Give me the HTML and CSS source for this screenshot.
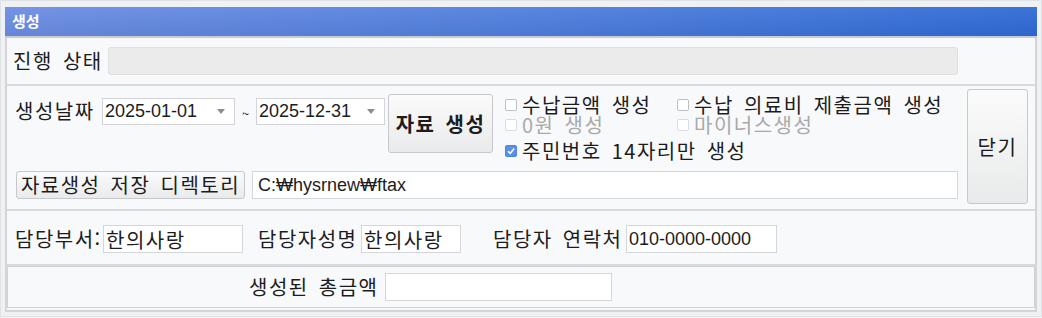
FILE: index.html
```html
<!DOCTYPE html>
<html lang="ko">
<head>
    <meta charset="UTF-8">
    <meta name="viewport" content="width=device-width, initial-scale=1.0">
    <title>생성</title>
    <link rel="stylesheet" href="styles.css">
</head>
<body>
    <div class="window">
        <div class="panel">
            <div class="titlebar">생성</div>
            <div class="panel-body">
                <!-- 진행 상태 -->
                <div class="sec sec-progress">
                    <span class="lbl">진행 상태</span>
                    <div class="progress"></div>
                </div>

                <!-- 자료 생성 -->
                <div class="sec sec-make">
                    <div class="make-main">
                        <div class="make-top">
                            <div class="date-row">
                                <span class="lbl lbl-date">생성날짜</span>
                                <div class="combo combo-from"><span>2025-01-01</span><i class="arrow"></i></div>
                                <span class="tilde">~</span>
                                <div class="combo combo-to"><span>2025-12-31</span><i class="arrow"></i></div>
                            </div>
                            <button class="btn btn-make">자료 생성</button>
                            <div class="opts">
                                <label class="opt"><span class="chk"></span>수납금액 생성</label>
                                <label class="opt"><span class="chk"></span>수납 의료비 제출금액 생성</label>
                                <label class="opt disabled"><span class="chk"></span>0원 생성</label>
                                <label class="opt disabled"><span class="chk"></span>마이너스생성</label>
                                <label class="opt opt-last"><span class="chk checked"><svg width="10" height="10" viewBox="0 0 10 10"><polyline points="2,5.2 4.2,7.4 8.2,2.6" fill="none" stroke="#fff" stroke-width="1.6"/></svg></span>주민번호 14자리만 생성</label>
                            </div>
                        </div>
                        <div class="make-dir">
                            <button class="btn btn-dir">자료생성 저장 디렉토리</button>
                            <input class="field field-dir" type="text" value="C:₩hysrnew₩ftax" readonly>
                        </div>
                    </div>
                    <button class="btn btn-close">닫기</button>
                </div>

                <!-- 담당자 정보 -->
                <div class="sec sec-staff">
                    <span class="lbl lbl-dept">담당부서:</span>
                    <input class="field field-dept" type="text" value="한의사랑" readonly>
                    <span class="lbl lbl-name">담당자성명</span>
                    <input class="field field-name" type="text" value="한의사랑" readonly>
                    <span class="lbl lbl-tel">담당자 연락처</span>
                    <input class="field field-tel num" type="text" value="010-0000-0000" readonly>
                </div>

                <!-- 총금액 -->
                <div class="sec-total">
                    <span class="lbl lbl-total">생성된 총금액</span>
                    <input class="field field-total" type="text" value="" readonly>
                </div>
            </div>
        </div>
    </div>
</body>
</html>
```

FILE: styles.css
```css
* {
    box-sizing: border-box;
}
body {
    margin: 0;
    background-color: #f3f4f6;
    font-family: "Noto Sans CJK KR", sans-serif;
    font-size: 20px;
    letter-spacing: 1.5px;
    word-spacing: 3px;
    color: #1c1c1c;
}
.window {
    width: 1042px;
    height: 317px;
    border: 1px solid #dfe2e6;
    background-color: #f0f1f3;
    padding: 6px 0 0 4px;
}
.panel {
    width: 1032px;
}
.titlebar {
    height: 31px;
    padding-left: 7px;
    line-height: 27px;
    font-size: 15px;
    font-weight: bold;
    letter-spacing: 0;
    color: #fff;
    border-bottom: 2px solid #c9cbcf;
    background: linear-gradient(to bottom, rgba(255,255,255,0.06), rgba(0,0,0,0.05)),
                linear-gradient(to right, #6c8de3 0%, #4f7fde 50%, #2f6ad6 100%);
}
.panel-body {
    background-color: #f8f9fb;
    border-left: 2px solid #d3d5d8;
    border-right: 2px solid #d3d5d8;
    border-bottom: 2px solid #d3d5d8;
    padding-bottom: 2px;
}
.sec {
    border-bottom: 2px solid #d8dadd;
}
.lbl {
    flex: none;
    line-height: 28px;
    white-space: nowrap;
}

/* 진행 상태 */
.sec-progress {
    display: flex;
    align-items: center;
    height: 48px;
    padding: 0 77px 0 6px;
    gap: 5px;
}
.progress {
    flex: 1;
    height: 28px;
    background-color: #ebebeb;
    border: 1px solid #dfdfdf;
    border-radius: 3px;
}

/* 자료 생성 */
.sec-make {
    display: flex;
    height: 125px;
    padding: 3px 7px 0 7px;
    gap: 9px;
}
.make-main {
    flex: 1;
    padding-top: 5px;
}
.make-top {
    display: flex;
    align-items: flex-start;
    height: 67px;
}
.date-row {
    display: flex;
    align-items: center;
    margin-top: 3px;
}
.lbl-date {
    width: 88px;
    padding-left: 1px;
}
.combo {
    display: flex;
    align-items: center;
    height: 27px;
    padding: 0 9px 0 2px;
    background-color: #fff;
    border: 1px solid #d2d4d7;
    font-family: "Liberation Sans", sans-serif;
    font-size: 18px;
    letter-spacing: 0;
    word-spacing: 0;
}
.combo-from {
    width: 133px;
}
.combo-to {
    width: 129px;
}
.arrow {
    margin-left: auto;
    width: 0;
    height: 0;
    border-top: 5px solid #8c8c8c;
    border-left: 4px solid transparent;
    border-right: 4px solid transparent;
}
.tilde {
    width: 21px;
    text-align: center;
    font-size: 13px;
    letter-spacing: 0;
    padding-top: 4px;
}
.btn {
    font-family: "Noto Sans CJK KR", sans-serif;
    font-size: 20px;
    letter-spacing: 1.5px;
    word-spacing: 3px;
    color: #1c1c1c;
    background: linear-gradient(to bottom, #fbfbfb, #e9eaeb);
    border: 1px solid #c6c8cb;
    border-radius: 3px;
    padding: 0;
    cursor: pointer;
}
.btn-make {
    width: 105px;
    height: 59px;
    margin-left: 3px;
    font-weight: bold;
}
.opts {
    display: grid;
    grid-template-columns: 172px auto;
    margin: 1px 0 0 12px;
}
.opt {
    display: flex;
    align-items: center;
    gap: 5px;
    height: 20px;
    line-height: 20px;
    white-space: nowrap;
}
.opt.disabled {
    color: #a9a9a9;
}
.opt-last {
    margin-top: 6px;
    grid-column: 1 / 3;
}
.chk {
    display: flex;
    align-items: center;
    justify-content: center;
    width: 12px;
    height: 12px;
    background-color: #fff;
    border: 1px solid #bcbec1;
    border-radius: 2px;
}
.opt.disabled .chk {
    border-color: #dadcdf;
}
.chk.checked {
    background-color: #5c8fe8;
    border-color: #4f83e0;
}
.make-dir {
    display: flex;
    gap: 7px;
    margin-top: 10px;
}
.btn-dir {
    width: 229px;
    height: 28px;
    margin-left: 2px;
    line-height: 26px;
}
.btn-close {
    width: 61px;
    height: 115px;
}

/* 입력칸 */
.field {
    flex: none;
    height: 28px;
    padding: 0 2px;
    background-color: #fff;
    border: 1px solid #d4d6d9;
    font-family: "Noto Sans CJK KR", sans-serif;
    font-size: 20px;
    letter-spacing: 1.5px;
    color: #1c1c1c;
    outline: none;
}
.field-dir {
    flex: 1;
    padding-left: 5px;
    font-family: "Liberation Sans", "Noto Sans CJK KR", sans-serif;
    font-size: 18px;
    letter-spacing: 0;
}
.num {
    font-family: "Liberation Sans", sans-serif;
    font-size: 18px;
    letter-spacing: 0;
}

/* 담당자 정보 */
.sec-staff {
    display: flex;
    align-items: center;
    height: 55px;
    padding: 3px 0 0 8px;
}
.lbl-dept {
    width: 88px;
}
.field-dept {
    width: 140px;
}
.lbl-name {
    width: 103px;
    margin-left: 15px;
}
.field-name {
    width: 100px;
}
.lbl-tel {
    width: 133px;
    margin-left: 32px;
}
.field-tel {
    width: 151px;
}

/* 총금액 */
.sec-total {
    display: flex;
    align-items: flex-start;
    height: 42px;
    padding: 6px 0 0 241px;
    border: 1px solid #d0d2d5;
}
.lbl-total {
    width: 136px;
}
.field-total {
    width: 227px;
}
```
